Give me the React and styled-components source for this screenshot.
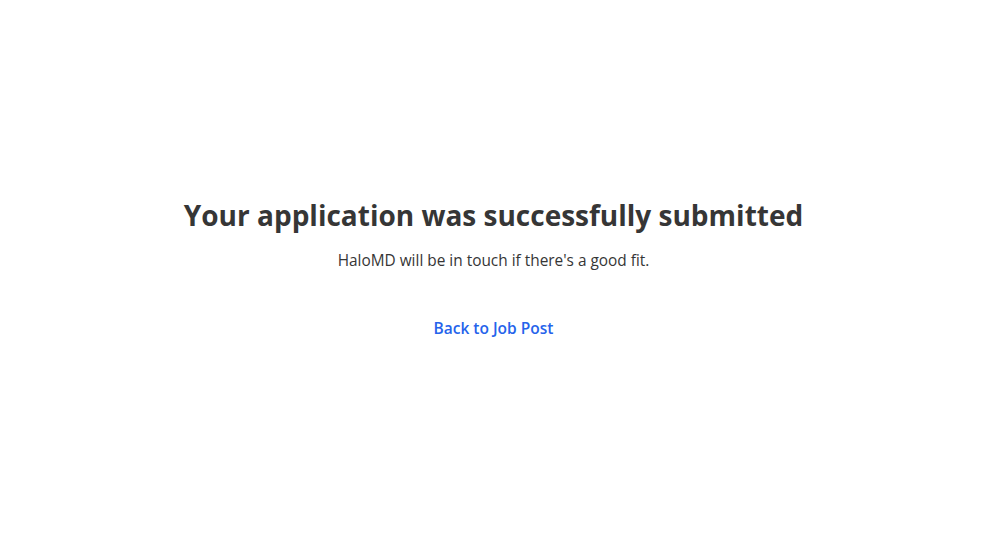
import React from "react";
import styled, { createGlobalStyle } from "styled-components";

const GlobalStyle = createGlobalStyle`
  html, body {
    margin: 0;
    padding: 0;
    background: #fff;
  }
  body {
    font-family: "Open Sans", "Noto Sans", sans-serif;
    color: #363636;
  }
`;

const Page = styled.div`
  height: 547px;
  display: flex;
  flex-direction: column;
  align-items: center;
  padding-top: 195px;
  box-sizing: border-box;
`;

const Title = styled.h1`
  margin: 0;
  font-size: 28px;
  font-weight: 700;
  line-height: 40px;
  color: #363636;
`;

const Message = styled.p`
  margin: 16px 0 0;
  font-size: 15.4px;
  line-height: 20px;
  color: #363636;
`;

const BackLink = styled.a`
  margin-top: 47px;
  font-size: 15.5px;
  font-weight: 600;
  line-height: 20px;
  color: #2563eb;
  text-decoration: none;
  cursor: pointer;
`;

const App = () => {
  return (
    <>
      <GlobalStyle />
      <Page>
        <Title>Your application was successfully submitted</Title>
        <Message>HaloMD will be in touch if there's a good fit.</Message>
        <BackLink href="#">Back to Job Post</BackLink>
      </Page>
    </>
  );
};

export default App;
